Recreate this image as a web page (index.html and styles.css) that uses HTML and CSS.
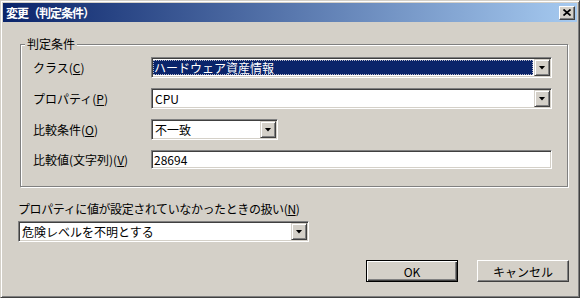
FILE: index.html
```html
<!DOCTYPE html>
<html lang="ja">
<head>
    <meta charset="UTF-8">
    <meta name="viewport" content="width=device-width, initial-scale=1.0">
    <title>変更（判定条件）</title>
    <link rel="stylesheet" href="styles.css">
</head>
<body>
    <div class="dialog">
        <div class="title-bar">
            <span class="title-text">変更（判定条件）</span>
            <button class="close-btn" aria-label="閉じる">
                <svg width="8" height="7" viewBox="0 0 8 7">
                    <path d="M0.5 0.5 L7.5 6.5 M7.5 0.5 L0.5 6.5" stroke="#000" stroke-width="1.7" fill="none"/>
                </svg>
            </button>
        </div>

        <div class="dialog-body">
            <fieldset class="group">
                <legend>判定条件</legend>
                <div class="group-rows">
                    <div class="field-row">
                        <label class="field-label">クラス(<u>C</u>)</label>
                        <div class="combo combo-wide is-focused">
                            <span class="combo-value">ハードウェア資産情報</span>
                            <span class="combo-arrow"></span>
                        </div>
                    </div>
                    <div class="field-row">
                        <label class="field-label">プロパティ(<u>P</u>)</label>
                        <div class="combo combo-wide">
                            <span class="combo-value">CPU</span>
                            <span class="combo-arrow"></span>
                        </div>
                    </div>
                    <div class="field-row">
                        <label class="field-label">比較条件(<u>O</u>)</label>
                        <div class="combo combo-narrow">
                            <span class="combo-value">不一致</span>
                            <span class="combo-arrow"></span>
                        </div>
                    </div>
                    <div class="field-row">
                        <label class="field-label">比較値(文字列)(<u>V</u>)</label>
                        <div class="textbox">28694</div>
                    </div>
                </div>
            </fieldset>

            <div class="missing">
                <div class="missing-label">プロパティに値が設定されていなかったときの扱い(<u>N</u>)</div>
                <div class="combo combo-medium">
                    <span class="combo-value">危険レベルを不明とする</span>
                    <span class="combo-arrow"></span>
                </div>
            </div>

            <div class="actions">
                <button class="btn btn-default">OK</button>
                <button class="btn">キャンセル</button>
            </div>
        </div>
    </div>
</body>
</html>
```

FILE: styles.css
```css
* {
    margin: 0;
    padding: 0;
    box-sizing: border-box;
}

body {
    font-family: "Noto Sans CJK JP", "Liberation Sans", sans-serif;
    font-size: 12px;
    color: #000;
    background: #fff;
}

u {
    text-decoration: underline;
    text-underline-offset: 1px;
}

/* window frame */
.dialog {
    width: 580px;
    height: 298px;
    padding: 2px;
    background: #d4d0c8;
    border: 1px solid;
    border-color: #d4d0c8 #404040 #404040 #d4d0c8;
    box-shadow: inset 1px 1px #fff, inset -1px -1px #808080;
}

.title-bar {
    height: 19px;
    display: flex;
    align-items: center;
    justify-content: space-between;
    padding: 0 2px 0 3px;
    background: linear-gradient(to right, #0a246a, #a6caf0);
}

.title-text {
    color: #fff;
    font-size: 12px;
    font-weight: bold;
    letter-spacing: -1px;
    line-height: 19px;
}

.close-btn {
    width: 16px;
    height: 14px;
    display: flex;
    align-items: center;
    justify-content: center;
    background: #d4d0c8;
    border: 1px solid;
    border-color: #fff #404040 #404040 #fff;
    box-shadow: inset -1px -1px #808080;
}

.dialog-body {
    padding: 0 8px 0 15px;
}

/* group box */
.group {
    width: 548px;
    margin: 15px 0 0 2px;
    padding: 0;
    border: 1px solid #808080;
    box-shadow: 1px 1px #fff, inset 1px 1px #fff;
}

.group legend {
    margin-left: 4px;
    padding: 0 2px;
    line-height: 14px;
    background: #d4d0c8;
}

.group-rows {
    display: flex;
    flex-direction: column;
    gap: 10px;
    padding: 6px 0 17px 12px;
}

.field-row {
    display: flex;
    align-items: center;
}

.field-label {
    width: 118px;
    line-height: 14px;
}

/* combo boxes */
.combo {
    height: 21px;
    display: flex;
    padding: 1px;
    background: #fff;
    border: 1px solid;
    border-color: #808080 #fff #fff #808080;
    box-shadow: inset 1px 1px #404040, inset -1px -1px #d4d0c8;
}

.combo-wide {
    width: 401px;
}

.combo-narrow {
    width: 127px;
}

.combo-medium {
    width: 291px;
}

.combo-value {
    flex: 1;
    padding-left: 2px;
    line-height: 17px;
    white-space: nowrap;
    overflow: hidden;
}

.is-focused .combo-value {
    margin: 1px 1px 1px 0;
    padding-left: 1px;
    line-height: 15px;
    color: #fff;
    background: #0a246a;
    outline: 1px dotted #b8b8c8;
    outline-offset: -1px;
}

.combo-arrow {
    width: 16px;
    height: 17px;
    flex: none;
    display: flex;
    align-items: center;
    justify-content: center;
    background: #d4d0c8;
    border: 1px solid;
    border-color: #d4d0c8 #404040 #404040 #d4d0c8;
    box-shadow: inset 1px 1px #fff, inset -1px -1px #808080;
}

.combo-arrow::after {
    content: "";
    width: 7px;
    height: 4px;
    background: #000;
    clip-path: polygon(0 0, 100% 0, 50% 100%);
}

.textbox {
    width: 401px;
    height: 19px;
    padding: 1px 2px;
    line-height: 15px;
    background: #fff;
    border: 1px solid;
    border-color: #808080 #fff #fff #808080;
    box-shadow: inset 1px 1px #404040, inset -1px -1px #d4d0c8;
}

/* bottom part */
.missing {
    margin-top: 15px;
}

.missing-label {
    line-height: 14px;
    letter-spacing: -0.4px;
    margin-bottom: 5px;
}

.actions {
    display: flex;
    justify-content: flex-end;
    gap: 19px;
    margin-top: 18px;
}

.btn {
    width: 92px;
    height: 22px;
    font: inherit;
    color: #000;
    background: #d4d0c8;
    border: 1px solid;
    border-color: #fff #404040 #404040 #fff;
    box-shadow: inset -1px -1px #808080;
}

.btn-default {
    border: 1px solid #000;
    box-shadow: inset 1px 1px #fff, inset -1px -1px #404040, inset -2px -2px #808080;
}
```
